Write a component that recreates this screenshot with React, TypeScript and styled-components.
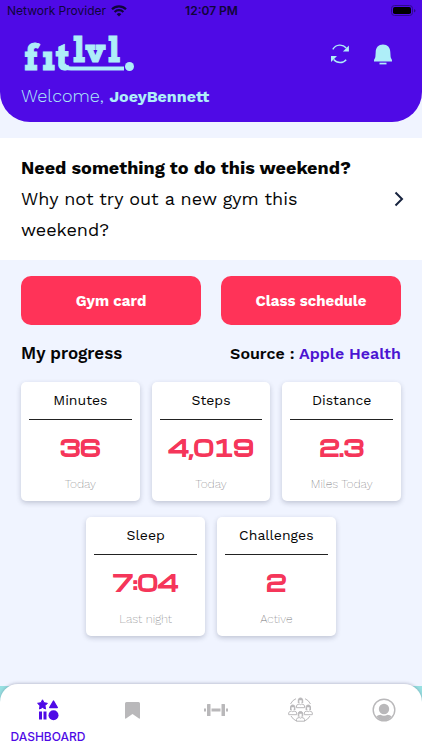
import React from "react";
import styled, { createGlobalStyle } from "styled-components";

const violet = "#4f0ae6";
const ice = "#aeeef8";
const coral = "#ff3358";
const grey = "#b9b8ba";

const GlobalStyle = createGlobalStyle`
  *, *::before, *::after { box-sizing: border-box; }
  body {
    margin: 0;
    background: #f0f4ff;
    color: #050505;
    font-family: "Work Sans", "Open Sans", "Noto Sans", sans-serif;
  }
  button { font: inherit; border: 0; padding: 0; background: none; color: inherit; cursor: pointer; }
  a { color: inherit; text-decoration: none; }
  h1, h2, p { margin: 0; }
  svg { display: block; flex: none; }
`;

const Screen = styled.div`
  display: flex;
  flex-direction: column;
  min-height: 100vh;
`;

const Header = styled.header`
  background: ${violet};
  border-radius: 0 0 30px 30px;
  height: 122px;
`;

const StatusBar = styled.div`
  display: grid;
  grid-template-columns: 1fr auto 1fr;
  align-items: center;
  height: 22px;
  padding: 0 6px 0 7px;
  color: #10053a;
  font: 400 12px/16px Inter, sans-serif;
`;

const Network = styled.span`
  display: flex;
  align-items: center;
  gap: 5px;
`;

const Clock = styled.span`
  font-weight: 600;
`;

const Battery = styled.span`
  justify-self: end;
`;

const Brand = styled.div`
  display: flex;
  align-items: center;
  justify-content: space-between;
  height: 62px;
  padding: 0 29px 0 20px;
  color: ${ice};
`;

const Actions = styled.div`
  display: flex;
  align-items: center;
  gap: 23px;
  padding-top: 2px;
`;

const Welcome = styled.p`
  padding: 0 21px;
  color: ${ice};
  font-size: 18px;
  line-height: 24px;
  font-weight: 300;
`;

const UserName = styled.strong`
  font-size: 16px;
  font-weight: 700;
`;

const Promo = styled.a`
  display: flex;
  align-items: center;
  justify-content: space-between;
  margin-top: 16px;
  padding: 14px 17px 15px 21px;
  background: #fff;
  font-size: 18px;
  line-height: 31px;
`;

const PromoText = styled.span`
  flex: 1;
  max-width: 345px;
`;

const PromoTitle = styled.strong`
  display: block;
  font-weight: 700;
  white-space: nowrap;
`;

const PromoBody = styled.span`
  display: block;
  max-width: 300px;
`;

const Main = styled.main`
  flex: 1;
  padding: 16px 21px 32px;
`;

const ButtonRow = styled.div`
  display: grid;
  grid-template-columns: 1fr 1fr;
  gap: 20px;
`;

const PrimaryButton = styled.button`
  && {
    height: 49px;
    border-radius: 10px;
    background: ${coral};
    color: #fff;
    font-size: 15px;
    font-weight: 700;
  }
`;

const SectionHead = styled.div`
  display: flex;
  align-items: center;
  justify-content: space-between;
  height: 24px;
  margin: 16px 0 17px;
`;

const SectionTitle = styled.h2`
  font-size: 17px;
  font-weight: 600;
`;

const Source = styled.p`
  font-size: 16px;
  font-weight: 600;
`;

const SourceLink = styled.a`
  color: #4b14d2;
`;

const Cards = styled.div`
  display: flex;
  flex-wrap: wrap;
  justify-content: center;
  gap: 16px 12px;
`;

const Card = styled.article`
  width: calc((100% - 24px) / 3);
  height: 119px;
  padding: 0 8px;
  border-radius: 5px;
  background: #fff;
  box-shadow: 0 2px 5px rgba(40, 50, 80, 0.24);
  text-align: center;
`;

const CardTitle = styled.h2`
  height: 38px;
  border-bottom: 1px solid #222;
  font-size: 14px;
  line-height: 37px;
  font-weight: 400;
`;

const CardValue = styled.p`
  font-family: Michroma, "DejaVu Sans", sans-serif;
  font-size: 21px;
  line-height: 54px;
  font-weight: 700;
  color: #f5365a;
  -webkit-text-stroke: 1px #f5365a;
`;

const CardNote = styled.p`
  font-size: 12px;
  line-height: 20px;
  font-weight: 200;
  color: #707074;
`;

const NavBack = styled.div`
  position: sticky;
  bottom: 0;
  background: linear-gradient(#f0f4ff 2px, #98e0e2 2px);
`;

const Nav = styled.nav`
  display: flex;
  justify-content: space-between;
  height: 66px;
  padding: 0 0 0 10px;
  border-radius: 18px 18px 0 0;
  background: #fff;
  box-shadow: 0 -1px 3px rgba(40, 50, 80, 0.24);
`;

const NavItem = styled.a<{ $active?: boolean }>`
  display: flex;
  flex-direction: column;
  align-items: center;
  width: 76px;
  padding-top: 13px;
  color: ${(p) => (p.$active ? violet : grey)};
  font: 500 12px/16px Inter, sans-serif;
`;

const NavIcon = styled.span`
  display: flex;
  align-items: center;
  height: 26px;
  margin-bottom: 6px;
`;

const Logo = () => (
  <svg width="118" height="48" viewBox="0 -2 118 48" role="img" aria-label="fitlvl." fill={ice} overflow="visible">
    <g fontFamily="Arvo, DejaVu Serif, serif" fontWeight="700" stroke={ice} strokeWidth="1">
      <text x="4 22 36" y="39" fontSize="36">fıt</text>
      <text x="53 65 88" y="31" fontSize="34">lvl</text>
    </g>
    <path d="M44 33Q45 37.500 51 37.500H104" fill="none" stroke={ice} strokeWidth="4" />
    <circle cx="109.500" cy="35.500" r="4.500" />
  </svg>
);

const WifiIcon = () => (
  <svg width="16" height="12" viewBox="0 0 16 12" fill="none" stroke="currentColor" strokeWidth="2.200">
    <path d="M1 4.300a10 10 0 0 1 14 0M3.600 7a6.300 6.300 0 0 1 8.800 0" />
    <path d="M8 11.600 5.700 9.200a3.300 3.300 0 0 1 4.600 0Z" fill="currentColor" stroke="none" />
  </svg>
);

const BatteryIcon = () => (
  <svg width="25" height="12" viewBox="0 0 25 12">
    <rect x="0.500" y="0.500" width="21" height="10" rx="3" fill="none" stroke="#2e0a8c" />
    <rect x="2" y="2" width="18" height="7" rx="1.800" fill="#000" />
    <path d="M23 4v3.500q1.500-.5 1.500-1.750T23 4Z" fill="#2e0a8c" />
  </svg>
);

const RefreshIcon = () => (
  <svg width="20" height="20" viewBox="0 0 20 20" fill="none" stroke="currentColor" strokeWidth="1.400">
    <path d="M2.800 5.300C6 .2 12.500-.2 16.300 4M3.700 15.500c3.500 4 9.300 4 12.500.2" />
    <path d="M18.900 1.500v6h-6ZM1 18v-6h6Z" fill="currentColor" stroke="none" />
  </svg>
);

const BellIcon = () => (
  <svg width="20" height="21" viewBox="0 0 20 21" fill="currentColor">
    <path d="M10 .5C5.500.5 2.800 3.500 2.700 8L2.400 12.500C2.300 14.500 1 15 1 16.500V17.500H19V16.500C19 15 17.700 14.500 17.600 12.500L17.300 8C17.200 3.500 14.500.5 10 .5Z" />
    <rect x="6.500" y="18.700" width="7" height="1.700" />
  </svg>
);

const DashboardIcon = () => (
  <svg width="22" height="22" viewBox="0 0 22 22" fill="currentColor">
    <path d="m5.500.8 1.500 2.900 3.400.6L8 6.700l.5 3.300-3-1.500-3 1.500.5-3.300L.6 4.300l3.400-.6Z" stroke="currentColor" strokeWidth="1" strokeLinejoin="round" />
    <path d="m16.500 2 3.800 6.500h-7.600Z" stroke="currentColor" strokeWidth="1.400" strokeLinejoin="round" />
    <path d="M2 12.500h3v8H2ZM6.500 12.500h3v8h-3Z" />
    <circle cx="16.500" cy="16.300" r="5" />
  </svg>
);

const BookmarkIcon = () => (
  <svg width="15" height="17" viewBox="0 0 15 17" fill="currentColor">
    <path d="M1.500 0h12Q15 0 15 1.500V16q0 1-1 .5L7.500 12 1 16.500Q0 17 0 16V1.500Q0 0 1.500 0Z" />
  </svg>
);

const DumbbellIcon = () => (
  <svg width="24" height="12" viewBox="0 0 24 12" fill="currentColor">
    <rect x="0" y="4.500" width="2" height="3" />
    <rect x="3" y="0" width="3.500" height="12" rx=".5" />
    <rect x="7.500" y="4.500" width="9" height="3" />
    <rect x="17.500" y="0" width="3.500" height="12" rx=".5" />
    <rect x="22" y="4.500" width="2" height="3" />
  </svg>
);

const people = [
  [12.5, 1],
  [4.7, 8],
  [20.3, 8],
  [12.5, 14.5],
];

const CommunityIcon = () => (
  <svg width="25" height="26" viewBox="0 0 25 26" fill="none" stroke="currentColor" strokeWidth="1">
    <path d="M2.500 7Q4.500 3 8 1.700M17 1.700Q20.500 3 22.500 7M3 19Q5 22.500 8.500 24M16.500 24Q20 22.500 22 19" />
    {people.map(([x, y]) => (
      <g key={`${x}-${y}`} transform={`translate(${x} ${y})`}>
        <path d="M-2.200 5V1.800Q-2 0 0 0T2.200 1.800V5" fill="currentColor" />
        <path d="M-1.200 2.300V4Q-1 5.300 0 5.300T1.200 4V2.300Z" fill="#fff" stroke="none" />
        <path d="M-4 9.700V8Q-3.800 6.200-1.300 6L0 6.700 1.300 6Q3.800 6.200 4 8V9.700Z" fill="#fff" />
      </g>
    ))}
  </svg>
);

const ProfileIcon = () => (
  <svg width="24" height="24" viewBox="0 0 24 24" fill="currentColor">
    <circle cx="12" cy="12" r="10.800" fill="none" stroke="currentColor" strokeWidth="1.400" />
    <circle cx="12" cy="11" r="5.200" />
    <path d="M4.300 18.500Q6 16.800 8.500 16.700 12 18.800 15.500 16.700 18 16.800 19.700 18.500 16.500 22.500 12 22.500T4.300 18.500Z" />
  </svg>
);

const stats = [
  { title: "Minutes", value: "36", note: "Today" },
  { title: "Steps", value: "4,019", note: "Today" },
  { title: "Distance", value: "2.3", note: "Miles Today" },
  { title: "Sleep", value: "7:04", note: "Last night" },
  { title: "Challenges", value: "2", note: "Active" },
];

const tabs = [
  { name: "Saved", icon: <BookmarkIcon /> },
  { name: "Workouts", icon: <DumbbellIcon /> },
  { name: "Community", icon: <CommunityIcon /> },
  { name: "Profile", icon: <ProfileIcon /> },
];

export default function App() {
  return (
    <Screen>
      <GlobalStyle />
      <Header>
        <StatusBar>
          <Network>Network Provider <WifiIcon /></Network>
          <Clock>12:07 PM</Clock>
          <Battery><BatteryIcon /></Battery>
        </StatusBar>
        <Brand>
          <Logo />
          <Actions>
            <button type="button" aria-label="Refresh"><RefreshIcon /></button>
            <button type="button" aria-label="Notifications"><BellIcon /></button>
          </Actions>
        </Brand>
        <Welcome>Welcome, <UserName>JoeyBennett</UserName></Welcome>
      </Header>
      <Promo href="#gyms">
        <PromoText>
          <PromoTitle>Need something to do this weekend?</PromoTitle>
          <PromoBody>Why not try out a new gym this weekend?</PromoBody>
        </PromoText>
        <svg width="12" height="16" viewBox="0 0 12 16" fill="none" stroke="#18243f" strokeWidth="2">
          <path d="m2.500 1.500 6.500 6.500-6.500 6.500" />
        </svg>
      </Promo>
      <Main>
        <ButtonRow>
          <PrimaryButton type="button">Gym card</PrimaryButton>
          <PrimaryButton type="button">Class schedule</PrimaryButton>
        </ButtonRow>
        <SectionHead>
          <SectionTitle>My progress</SectionTitle>
          <Source>Source : <SourceLink href="#source">Apple Health</SourceLink></Source>
        </SectionHead>
        <Cards>
          {stats.map((s) => (
            <Card key={s.title}>
              <CardTitle>{s.title}</CardTitle>
              <CardValue>{s.value}</CardValue>
              <CardNote>{s.note}</CardNote>
            </Card>
          ))}
        </Cards>
      </Main>
      <NavBack>
        <Nav aria-label="Primary">
          <NavItem href="#dashboard" $active aria-current="page">
            <NavIcon><DashboardIcon /></NavIcon>
            DASHBOARD
          </NavItem>
          {tabs.map((t) => (
            <NavItem key={t.name} href={`#${t.name.toLowerCase()}`} aria-label={t.name}>
              <NavIcon>{t.icon}</NavIcon>
            </NavItem>
          ))}
        </Nav>
      </NavBack>
    </Screen>
  );
}
